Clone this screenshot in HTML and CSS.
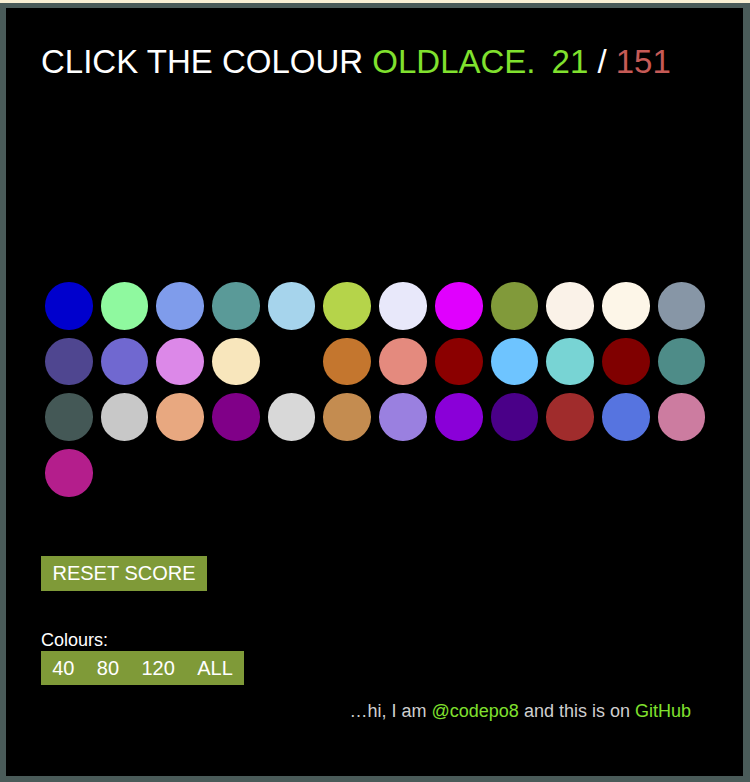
FILE: index.html
```html
<!DOCTYPE html>
<html lang="en">
<head>
<meta charset="utf-8">
<title>Colour game</title>
<link rel="stylesheet" href="styles.css">
</head>
<body>
<main class="frame">
  <h1 class="title">CLICK THE COLOUR <span class="target">OLDLACE.</span><span class="score"><span class="good">21</span> / <span class="total">151</span></span></h1>
  <ul class="swatches">
    <li class="dot" style="background:#0000cd"></li>
    <li class="dot" style="background:#8ff99f"></li>
    <li class="dot" style="background:#7f9ceb"></li>
    <li class="dot" style="background:#5a9a98"></li>
    <li class="dot" style="background:#a6d4ec"></li>
    <li class="dot" style="background:#b5d44a"></li>
    <li class="dot" style="background:#e8e8fa"></li>
    <li class="dot" style="background:#e000fe"></li>
    <li class="dot" style="background:#819a3a"></li>
    <li class="dot" style="background:#faf2e8"></li>
    <li class="dot" style="background:#fdf6e8"></li>
    <li class="dot" style="background:#8796a6"></li>

    <li class="dot" style="background:#4f4690"></li>
    <li class="dot" style="background:#7068d0"></li>
    <li class="dot" style="background:#dc88e8"></li>
    <li class="dot" style="background:#f8e6bc"></li>
    <li class="dot hidden" style="background:#fdf5e6"></li>
    <li class="dot" style="background:#c4762e"></li>
    <li class="dot" style="background:#e48a7e"></li>
    <li class="dot" style="background:#8b0000"></li>
    <li class="dot" style="background:#6ec4ff"></li>
    <li class="dot" style="background:#78d4d4"></li>
    <li class="dot" style="background:#800000"></li>
    <li class="dot" style="background:#4e8c88"></li>

    <li class="dot" style="background:#445856"></li>
    <li class="dot" style="background:#c8c8c8"></li>
    <li class="dot" style="background:#e8a880"></li>
    <li class="dot" style="background:#800088"></li>
    <li class="dot" style="background:#d8d8d8"></li>
    <li class="dot" style="background:#c48c50"></li>
    <li class="dot" style="background:#9a80e0"></li>
    <li class="dot" style="background:#8a00d8"></li>
    <li class="dot" style="background:#4a0088"></li>
    <li class="dot" style="background:#a02c2c"></li>
    <li class="dot" style="background:#5674e0"></li>
    <li class="dot" style="background:#cc7ca0"></li>

    <li class="dot" style="background:#b41e8c"></li>
  </ul>
  <button class="reset" type="button">RESET SCORE</button>
  <p class="label">Colours:</p>
  <div class="levels">
    <button class="level" type="button">40</button><button class="level" type="button">80</button><button class="level" type="button">120</button><button class="level" type="button">ALL</button>
  </div>
  <p class="footer">…hi, I am <a href="#">@codepo8</a> and this is on <a href="#">GitHub</a></p>
</main>
</body>
</html>
```
FILE: styles.css
```css
html, body {
  margin: 0;
  padding: 0;
}
body {
  background: #faf0d4;
  padding-top: 3px;
  font-family: "Liberation Sans", Arial, sans-serif;
}
.frame {
  display: block;
  box-sizing: border-box;
  height: 779px;
  background: #000;
  border-style: solid;
  border-color: #4a5b59;
  border-width: 5px 7px 6px 6px;
  padding: 35px 35px 0 35px;
}
.title {
  margin: 0;
  font-size: 33px;
  line-height: 38px;
  font-weight: normal;
  color: #fff;
  white-space: nowrap;
}
.target {
  color: #80e12e;
}
.score {
  margin-left: 16px;
}
.good {
  color: #80e12e;
}
.total {
  color: #c65a56;
}
.swatches {
  list-style: none;
  margin: 197px 0 0 0;
  padding: 0;
  width: 669px;
  display: flex;
  flex-wrap: wrap;
}
.dot {
  width: 47.7px;
  height: 47.7px;
  margin: 4px;
  border-radius: 50%;
}
.hidden {
  visibility: hidden;
}
.reset {
  display: block;
  margin: 55px 0 0 0;
  border: 0;
  background: #7f9a38;
  color: #fff;
  font-family: "Liberation Sans", Arial, sans-serif;
  font-size: 20px;
  line-height: 35px;
  height: 35px;
  padding: 0 11.5px;
}
.label {
  margin: 39px 0 0 0;
  color: #fff;
  font-size: 18px;
  line-height: 20px;
}
.levels {
  display: inline-flex;
  margin-top: 1px;
  background: #7f9a38;
  height: 34px;
}
.level {
  border: 0;
  background: transparent;
  color: #fff;
  font-family: "Liberation Sans", Arial, sans-serif;
  font-size: 20px;
  line-height: 34px;
  padding: 0 11.2px;
}
.footer {
  margin: 16px 0 0 0;
  text-align: right;
  padding-right: 17px;
  color: #cfcfcf;
  font-size: 18px;
  line-height: 20px;
}
.footer a {
  color: #80e12e;
  text-decoration: none;
}
```
